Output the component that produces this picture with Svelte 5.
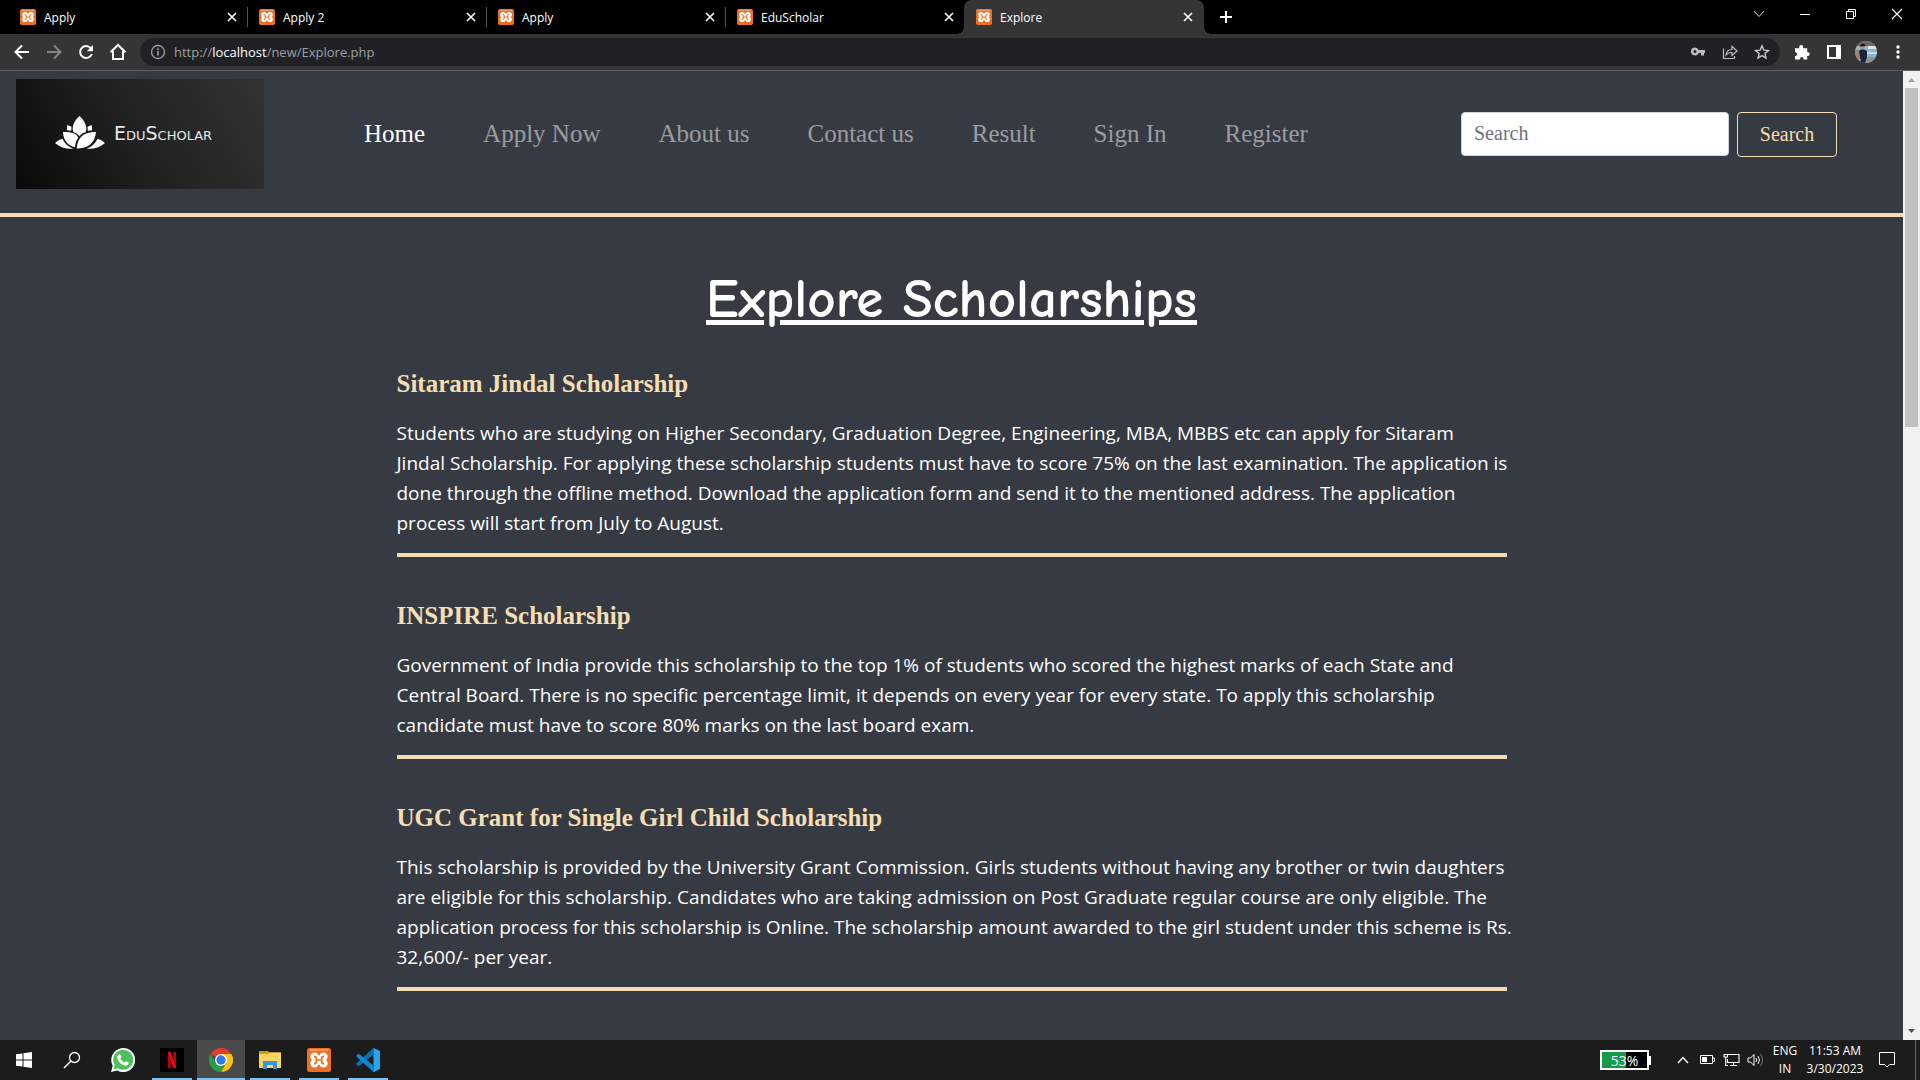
<script>
  const tabs = ['Apply', 'Apply 2', 'Apply', 'EduScholar', 'Explore'];
  const links = ['Home', 'Apply Now', 'About us', 'Contact us', 'Result', 'Sign In', 'Register'];
  const scholarships = [
    {
      name: 'Sitaram Jindal Scholarship',
      text: 'Students who are studying on Higher Secondary, Graduation Degree, Engineering, MBA, MBBS etc can apply for Sitaram\nJindal Scholarship. For applying these scholarship students must have to score 75% on the last examination. The application is done through the offline method. Download the application form and send it to the mentioned address. The application\nprocess will start from July to August.'
    },
    {
      name: 'INSPIRE Scholarship',
      text: 'Government of India provide this scholarship to the top 1% of students who scored the highest marks of each State and Central Board. There is no specific percentage limit, it depends on every year for every state. To apply this scholarship candidate must have to score 80% marks on the last board exam.'
    },
    {
      name: 'UGC Grant for Single Girl Child Scholarship',
      text: 'This scholarship is provided by the University Grant Commission. Girls students without having any brother or twin daughters are eligible for this scholarship. Candidates who are taking admission on Post Graduate regular course are only eligible. The application process for this scholarship is Online. The scholarship amount awarded to the girl student under this scheme is Rs. 32,600/- per year.'
    }
  ];
  const active = 4;
  const charge = 53;
</script>

{#snippet xampp(size)}
  <svg width={size} height={size} viewBox="0 0 24 24" aria-hidden="true">
    <rect width="24" height="24" rx="2.5" fill="#ee6f20" />
    <path d="M3 2h18" stroke="#fbb27e" stroke-width="1.2" />
    <g fill="#fff">
      <circle cx="7.500" cy="8.600" r="4.200" /><circle cx="16.500" cy="8.600" r="4.200" />
      <circle cx="7.500" cy="15.400" r="4.200" /><circle cx="16.500" cy="15.400" r="4.200" />
      <path d="M6 7.500h12v9H6z" />
    </g>
    <path d="M7 8.300q2.300 0 2.300 1.800v3.800q0 1.800-2.300 1.800M17 8.300q-2.300 0-2.300 1.800v3.800q0 1.800 2.300 1.800M9 12h6" fill="none" stroke="#ee6f20" stroke-width="1.700" />
  </svg>
{/snippet}

<div class="screen">
  <div class="tabstrip">
    {#each tabs as title, i}
      <div class="tab" class:active={i === active} class:plain={i >= active - 1}>
        <button class="tab-title">{@render xampp(16)}<span>{title}</span></button>
        <button class="close" aria-label="Close tab">
          <svg width="10" height="10" viewBox="0 0 10 10"><path d="M1 1l8 8M9 1l-8 8" stroke="#fff" stroke-width="1.6" /></svg>
        </button>
      </div>
    {/each}
    <button class="new-tab" aria-label="New tab">
      <svg width="12" height="12" viewBox="0 0 12 12"><path d="M6 0v12M0 6h12" stroke="#fff" stroke-width="2" /></svg>
    </button>
    <div class="window-controls">
      <button aria-label="Search tabs"><svg width="12" height="12" viewBox="0 0 12 12"><path d="M1 3l5 5.500L11 3" fill="none" stroke="#ccc" /></svg></button>
      <button aria-label="Minimize"><svg width="12" height="12" viewBox="0 0 12 12"><path d="M1 6.500h10" stroke="#fff" /></svg></button>
      <button aria-label="Restore"><svg width="12" height="12" viewBox="0 0 12 12"><path d="M1.500 3.500h7v7h-7zM3.500 3.500v-2h7v7h-2" fill="none" stroke="#fff" /></svg></button>
      <button aria-label="Close window"><svg width="12" height="12" viewBox="0 0 12 12"><path d="M1 1l10 10M11 1L1 11" stroke="#fff" stroke-width="1.200" /></svg></button>
    </div>
  </div>

  <div class="toolbar">
    <button class="tool" aria-label="Back"><svg width="16" height="16" viewBox="0 0 16 16"><path d="M15 8H2M8 1.500L1.500 8 8 14.500" fill="none" stroke="#fff" stroke-width="2" /></svg></button>
    <button class="tool" aria-label="Forward"><svg width="16" height="16" viewBox="0 0 16 16"><path d="M1 8h13M8 1.500L14.500 8 8 14.500" fill="none" stroke="#858585" stroke-width="2" /></svg></button>
    <button class="tool" aria-label="Reload"><svg width="16" height="16" viewBox="0 0 16 16"><path d="M13.800 10A6 6 0 1 1 12.800 4.200" fill="none" stroke="#fff" stroke-width="2" /><path d="M15 1v6.200H8.800z" fill="#fff" /></svg></button>
    <button class="tool" aria-label="Home page"><svg width="18" height="18" viewBox="0 0 18 18"><path d="M1.500 9.200L9 2l7.500 7.200M4 8v8h10V8" fill="none" stroke="#fff" stroke-width="2" /></svg></button>
    <div class="omnibox">
      <svg width="16" height="16" viewBox="0 0 16 16"><circle cx="8" cy="8" r="6.500" fill="none" stroke="#9aa0a6" stroke-width="1.300" /><path d="M8 7v4.500M8 4.300v1.600" stroke="#9aa0a6" stroke-width="1.600" /></svg>
      <div class="url">http://<b>localhost</b>/new/Explore.php</div>
      <button aria-label="Passwords"><svg width="16" height="16" viewBox="0 0 16 16"><path d="M5 3.500a4 4 0 1 0 3.700 5.500H11v2.500h3V9h1V6H8.700A4 4 0 0 0 5 3.500zM5 6a1.500 1.500 0 1 1 0 3 1.500 1.500 0 0 1 0-3z" fill="#bdbdbd" fill-rule="evenodd" /></svg></button>
      <button aria-label="Share"><svg width="16" height="16" viewBox="0 0 16 16"><path d="M1.500 4.500v10h11v-2.500M4 11c.5-4 3-5.500 6-5.500V2.300L15 7l-5 4.500V8.500C7.500 8.500 5.500 9 4 11z" fill="none" stroke="#bdbdbd" stroke-width="1.200" /></svg></button>
      <button aria-label="Bookmark"><svg width="16" height="16" viewBox="0 0 16 16"><path d="M8 1.800l1.800 4.300 4.700.4-3.600 3 1.100 4.600L8 11.600l-4 2.500 1.100-4.600-3.600-3 4.700-.4z" fill="none" stroke="#c8c8c8" stroke-width="1.400" /></svg></button>
    </div>
    <button class="ext" aria-label="Extensions"><svg width="16" height="16" viewBox="0 0 16 16"><path d="M1 4.200h4.200V3a2 2 0 0 1 4 0v1.200h4v4h.6a1.900 1.900 0 0 1 0 3.800h-.6v3.500H9.500v-.8a1.700 1.700 0 0 0-3.400 0v.8H1v-3.600h.7a1.900 1.900 0 0 0 0-3.700H1z" fill="#fff" /></svg></button>
    <button class="ext" aria-label="Side panel"><svg width="14" height="14" viewBox="0 0 14 14"><path d="M0 0h14v14H0zM2 2v10h7V2z" fill="#fff" fill-rule="evenodd" /></svg></button>
    <button class="ext" aria-label="Profile">
      <svg width="22" height="22" viewBox="0 0 22 22">
        <defs><clipPath id="face"><circle cx="11" cy="11" r="11" /></clipPath></defs>
        <g clip-path="url(#face)">
          <path d="M0 0h22v22H0z" fill="#8fb6cb" /><path d="M0 0h22v5H0z" fill="#6b6663" /><path d="M13 5h9v3h-9z" fill="#d5e3ea" />
          <path d="M12 11h10v2H12z" fill="#c8dde8" />
          <path d="M0 9h5v9H0z" fill="#a67f70" /><path d="M11 16h11v6H11z" fill="#8d9094" />
          <path d="M4 10l2-1.500h3L12 10v6l-2 6H6z" fill="#17233a" /><circle cx="7.500" cy="6" r="2.200" fill="#b98b75" /><path d="M5 5.500c0-4 5.500-4 5.500-.5z" fill="#1b1715" />
        </g>
      </svg>
    </button>
    <button class="ext" aria-label="Menu"><svg width="4" height="14" viewBox="0 0 4 14"><g fill="#fff"><circle cx="2" cy="2" r="1.700" /><circle cx="2" cy="7" r="1.700" /><circle cx="2" cy="12" r="1.700" /></g></svg></button>
  </div>

  <div class="viewport">
    <div class="page">
      <nav>
        <a class="brand" href="#home" aria-label="EduScholar">
          <svg width="50" height="34" viewBox="0 0 50 34" aria-hidden="true">
            <g fill="#fff">
              <path d="M24.500 0c4.500 4 6.800 8.500 6.800 12.500 0 1.700-.3 2.700-.8 3.700-2.300.5-4.300 1.800-6 3.800-1.700-2-3.700-3.300-6-3.800-.5-1-.8-2-.8-3.700C17.700 8.500 20 4 24.500 0z" />
              <path d="M12.300 9l4.200 1.800-.3 4-4.400-.6zM36.700 9l-4.200 1.800.3 4 4.400-.6z" />
              <path d="M8 16c8-.2 14 1.500 15.300 5.500-2 2.800-3 6-3.300 9.800C13 29.500 8.500 25 8 16z" />
              <path d="M41 16c-10-.5-18.700 4-19.300 16.500C33 32.500 40 27 41 16z" />
              <path d="M0 27c2.500-2.200 4.800-3.500 7.500-4.300C9.500 27.300 13 30.700 18.500 32.700 12 33.500 5 31.500 0 27zM50 27c-2.500-2.200-4.800-3.500-7.500-4.300C40.500 27.300 37 30.700 31.500 32.700 38 33.500 45 31.500 50 27z" />
            </g>
          </svg>
          <span>EduScholar</span>
        </a>
        <div class="links">
          {#each links as link, i}
            <a href="#{link}" class:current={i === 0}>{link}</a>
          {/each}
        </div>
        <form class="search">
          <input type="search" placeholder="Search" aria-label="Search" />
          <button type="button">Search</button>
        </form>
      </nav>
      <main>
        <h1>Explore Scholarships</h1>
        {#each scholarships as item}
          <section>
            <h2>{item.name}</h2>
            <p>{item.text}</p>
          </section>
        {/each}
      </main>
    </div>
    <div class="scrollbar" aria-hidden="true">
      <svg width="17" height="17" viewBox="0 0 17 17"><path d="M5 11h7L8.500 7z" fill="#a3a3a3" /></svg>
      <div class="thumb"></div>
      <svg width="17" height="17" viewBox="0 0 17 17"><path d="M5 6h7l-3.500 4z" fill="#505050" /></svg>
    </div>
  </div>

  <div class="taskbar">
    <button class="app sys" aria-label="Start"><svg width="16" height="16" viewBox="0 0 16 16"><path d="M0 2.300l6.500-.9v6.100H0zM7.500 1.200L16 0v7.500H7.500zM0 8.500h6.500v6.100L0 13.700zM7.500 8.500H16V16l-8.500-1.200z" fill="#fff" /></svg></button>
    <button class="app sys find" aria-label="Search"><svg width="18" height="18" viewBox="0 0 18 18"><circle cx="11.500" cy="6.500" r="5" fill="none" stroke="#fff" stroke-width="1.300" /><path d="M8 10L1 17" stroke="#fff" stroke-width="1.500" /></svg></button>
    <button class="app" aria-label="WhatsApp">
      <svg width="24" height="24" viewBox="0 0 24 24"><path d="M0 24l1.700-6.200A12 12 0 1 1 6.200 22.400z" fill="#fff" /><path d="M2.500 21.500l1.300-4.300a10 10 0 1 1 3.200 3.100z" fill="#4cc35a" /><path d="M8 6.300c.7-.3 1.200-.2 1.500.5l.8 2c.2.600-.7 1.300-1 1.700.9 1.900 2.200 3 4.100 3.900.5-.4 1-1.400 1.600-1.200l2.200 1.100c.5.200.5 1 .2 1.600-.6 1.300-2.200 2-3.800 1.600C10 16.500 7.200 13.700 6.300 10.300c-.3-1.600.4-3.300 1.700-4z" fill="#fff" /></svg>
    </button>
    <button class="app open" aria-label="Netflix">
      <svg width="24" height="24" viewBox="0 0 24 24"><path d="M0 0h24v24H0z" fill="#000" /><path d="M8 4h2.800v16L8 20.300zM13.200 4H16v16.300l-2.800-.3z" fill="#b20710" /><path d="M8 4h2.800L16 20.300l-2.900-.3z" fill="#e50914" /></svg>
    </button>
    <button class="app open focused" aria-label="Chrome">
      <svg width="24" height="24" viewBox="0 0 24 24">
        <path d="M12 12L1.600 6A12 12 0 0 1 22.400 6z" fill="#e33b2e" />
        <path d="M12 6h10.400A12 12 0 0 1 12 24l5.200-9z" fill="#fbc116" />
        <path d="M1.600 6l5.200 9 5.200 3 3-.600L12 24A12 12 0 0 1 1.600 6z" fill="#2a9d48" />
        <circle cx="12" cy="12" r="6" fill="#fff" /><circle cx="12" cy="12" r="4.700" fill="#2f7de9" />
      </svg>
    </button>
    <button class="app open" aria-label="File Explorer">
      <svg width="22" height="18" viewBox="0 0 22 18"><path d="M0 0h9l1.500 1.500H22V5H0z" fill="#d9950f" /><path d="M0 3h9l1.500-1.500H22V17H0z" fill="#fcd462" /><path d="M4 18V10h14v8h-4v-4H8v4z" fill="#3a96d8" /></svg>
    </button>
    <button class="app open" aria-label="XAMPP">{@render xampp(24)}</button>
    <button class="app open" aria-label="Visual Studio Code">
      <svg width="24" height="24" viewBox="0 0 24 24"><path d="M17.500 0v6.500L3 18.200.500 16.800v-1.600z" fill="#0b72b5" /><path d="M17.500 24v-6.500L3 5.800.500 7.200v1.600z" fill="#1585ca" /><path d="M17.500 0L24 3v18l-6.500 3-1-1 1-1z" fill="#27a5ee" /></svg>
    </button>
    <div class="battery"><div class="level" style:width="{charge}%"></div><span>{charge}%</span></div>
    <button class="tray" aria-label="Hidden icons"><svg width="12" height="8" viewBox="0 0 12 8"><path d="M1 7l5-5.500L11 7" fill="none" stroke="#fff" stroke-width="1.300" /></svg></button>
    <button class="tray" aria-label="Battery"><svg width="15" height="10" viewBox="0 0 15 10"><path d="M.5.500h12v8H.500zM13 3h1.500v3.500H13" fill="none" stroke="#fff" /><path d="M2 2h5v5H2z" fill="#fff" /></svg></button>
    <button class="tray" aria-label="Network"><svg width="17" height="14" viewBox="0 0 17 14"><path d="M5 1.500h11v8H4.500V6M10.500 9.500v3M7 12.500h7M1 1.500h3.500v2.500H1zM2.700 4v8.500H5" fill="none" stroke="#fff" stroke-width="1.100" /></svg></button>
    <button class="tray" aria-label="Volume"><svg width="17" height="14" viewBox="0 0 17 14"><path d="M1 5h2.500L7 1.500v11L3.500 9H1z" fill="none" stroke="#fff" /><path d="M9 5q1.500 2 0 4M11 3q3 4 0 8" fill="none" stroke="#fff" /><path d="M13.500 1q4 6 0 12" fill="none" stroke="#777" /></svg></button>
    <button class="label lang"><span>ENG</span><span>IN</span></button>
    <button class="label clock"><span>11:53 AM</span><span>3/30/2023</span></button>
    <button class="tray note" aria-label="Notifications"><svg width="16" height="16" viewBox="0 0 16 16"><path d="M.5.500h15v12H10.500L8 15l-2.500-2.500h-5z" fill="none" stroke="#fff" /></svg></button>
    <div class="peek"></div>
  </div>
</div>

<style>
  :global(body) {
    margin: 0;
    background: #363a42;
  }
  .screen {
    display: flex;
    flex-direction: column;
    height: 100vh;
    overflow: hidden;
    font-family: 'Segoe UI', 'Open Sans', 'Noto Sans', sans-serif;
    color: #fff;
  }
  .screen :global(svg) {
    display: block;
    flex: none;
  }
  button {
    display: flex;
    align-items: center;
    justify-content: center;
    padding: 0;
    border: 0;
    background: none;
    color: inherit;
    font: inherit;
  }

  .tabstrip {
    display: flex;
    flex: none;
    height: 34px;
    padding-left: 8px;
    background: #000;
    font-size: 12px;
  }
  .tab {
    position: relative;
    display: flex;
    box-sizing: border-box;
    width: 239px;
    padding: 0 10px 0 12px;
  }
  .tab:not(.plain)::after {
    content: '';
    position: absolute;
    right: -1px;
    top: 7px;
    width: 1px;
    height: 20px;
    background: #555;
  }
  .tab.active {
    width: 240px;
    padding-right: 11px;
    border-radius: 8px 8px 0 0;
    background: #353535;
  }
  .tab.active::before,
  .tab.active::after {
    content: '';
    position: absolute;
    top: auto;
    bottom: 0;
    width: 8px;
    height: 8px;
  }
  .tab.active::before {
    left: -8px;
    background: radial-gradient(circle at 0 0, #000 8px, #353535 8px);
  }
  .tab.active::after {
    right: -8px;
    background: radial-gradient(circle at 100% 0, #000 8px, #353535 8px);
  }
  .tab-title {
    flex: 1;
    justify-content: flex-start;
    gap: 8px;
  }
  .close {
    width: 10px;
  }
  .new-tab {
    width: 44px;
  }
  .window-controls {
    display: flex;
    margin-left: auto;
    padding-bottom: 6px;
  }
  .window-controls button {
    width: 46px;
  }

  .toolbar {
    display: flex;
    flex: none;
    align-items: center;
    height: 36px;
    padding: 0 6px;
    border-bottom: 1px solid #5f6060;
    background: #353535;
  }
  .tool {
    width: 32px;
    height: 28px;
  }
  .omnibox {
    display: flex;
    flex: 1;
    align-items: center;
    height: 28px;
    margin: 0 6px;
    padding: 0 10px;
    border-radius: 14px;
    background: #202124;
    font-size: 13px;
  }
  .omnibox button {
    width: 16px;
    margin-left: 16px;
  }
  .url {
    flex: 1;
    padding-left: 8px;
    color: #9aa0a6;
  }
  .url b {
    color: #fff;
    font-weight: 400;
  }
  .ext {
    width: 32px;
  }

  .viewport {
    display: flex;
    flex: 1;
    min-height: 0;
    background: #363a42;
  }
  .page {
    flex: 1;
    overflow: hidden;
  }
  nav {
    display: flex;
    align-items: center;
    padding: 8px 66px 24px 16px;
    border-bottom: 4px solid #f5deb3;
    font-family: 'Times New Roman', 'Liberation Serif', serif;
  }
  .brand {
    display: flex;
    align-items: center;
    box-sizing: border-box;
    width: 248px;
    height: 110px;
    padding: 0 0 2px 39px;
    gap: 9px;
    background: linear-gradient(60deg, #0a0a0a, #222 50%, #333);
    color: #e8e8e8;
    font-family: 'DejaVu Sans', sans-serif;
    font-size: 19px;
    font-variant: small-caps;
    text-decoration: none;
  }
  .links {
    display: flex;
    gap: 58px;
    margin: 0 auto 0 100px;
    font-size: 25px;
    line-height: 38px;
  }
  .links a {
    color: rgba(255, 255, 255, 0.5);
    text-decoration: none;
    white-space: nowrap;
  }
  .links a.current {
    color: #fff;
  }
  .search {
    display: flex;
    gap: 8px;
    font-size: 20px;
  }
  .search input {
    box-sizing: border-box;
    width: 268px;
    height: 44px;
    padding: 0 12px;
    border: 1px solid #ced4da;
    border-radius: 4px;
    background: #fff;
    font: inherit;
  }
  .search input::placeholder {
    color: #6c757d;
    opacity: 1;
  }
  .search button {
    width: 100px;
    height: 45px;
    border: 1px solid #f5deb3;
    border-radius: 4px;
    color: #f5deb3;
  }

  main {
    max-width: 1110px;
    margin: 0 auto;
  }
  h1 {
    margin: 48px 0 35px;
    font-family: 'Comic Sans MS', 'Comic Neue', Lato, sans-serif;
    font-size: 55px;
    font-weight: 700;
    line-height: 68px;
    text-align: center;
    text-decoration: underline;
    text-decoration-thickness: 5px;
  }
  section {
    margin-bottom: 43px;
    padding-bottom: 15px;
    border-bottom: 4px solid #f5deb3;
  }
  h2 {
    margin: 0 0 18px;
    color: #f5deb3;
    font-family: 'Times New Roman', 'Liberation Serif', serif;
    font-size: 25px;
    line-height: 32px;
  }
  p {
    margin: 0 -10px 0 0;
    font-size: 19px;
    line-height: 30px;
    white-space: pre-line;
  }
  .scrollbar {
    display: flex;
    flex: none;
    flex-direction: column;
    justify-content: space-between;
    width: 17px;
    background: #f1f1f1;
  }
  .thumb {
    flex: 0 0 35%;
    margin: 0 2px auto;
    background: #c1c1c1;
  }

  .taskbar {
    display: flex;
    flex: none;
    height: 40px;
    background: #1c1c1c;
  }
  .app {
    position: relative;
    width: 48px;
    margin-right: 1px;
  }
  .app.sys {
    margin-right: 0;
  }
  .app.find {
    margin-right: 3px;
  }
  .app.open::after {
    content: '';
    position: absolute;
    right: 4px;
    bottom: 0;
    left: 4px;
    height: 2px;
    background: #76c3f8;
  }
  .app.focused {
    background: #4a4a4a;
  }
  .app.focused::after {
    right: 0;
    left: 0;
  }
  .battery {
    position: relative;
    display: flex;
    align-items: center;
    justify-content: center;
    box-sizing: border-box;
    width: 49px;
    height: 20px;
    margin: 10px 22px 0 auto;
    border: 2px solid #fff;
    background: #000;
    font-size: 14px;
  }
  .battery::after {
    content: '';
    position: absolute;
    right: -4px;
    top: 4px;
    width: 2px;
    height: 9px;
    background: #fff;
  }
  .level {
    position: absolute;
    inset: 0 auto 0 0;
    background: #159b49;
  }
  .battery span {
    position: relative;
  }
  .tray {
    width: 24px;
  }
  .label {
    flex-direction: column;
    font-size: 12px;
    line-height: 18px;
    white-space: nowrap;
  }
  .lang {
    width: 36px;
  }
  .clock {
    width: 64px;
  }
  .note {
    width: 40px;
  }
  .peek {
    width: 1px;
    margin: 0 4px 0 8px;
    background: #666;
  }
</style>
